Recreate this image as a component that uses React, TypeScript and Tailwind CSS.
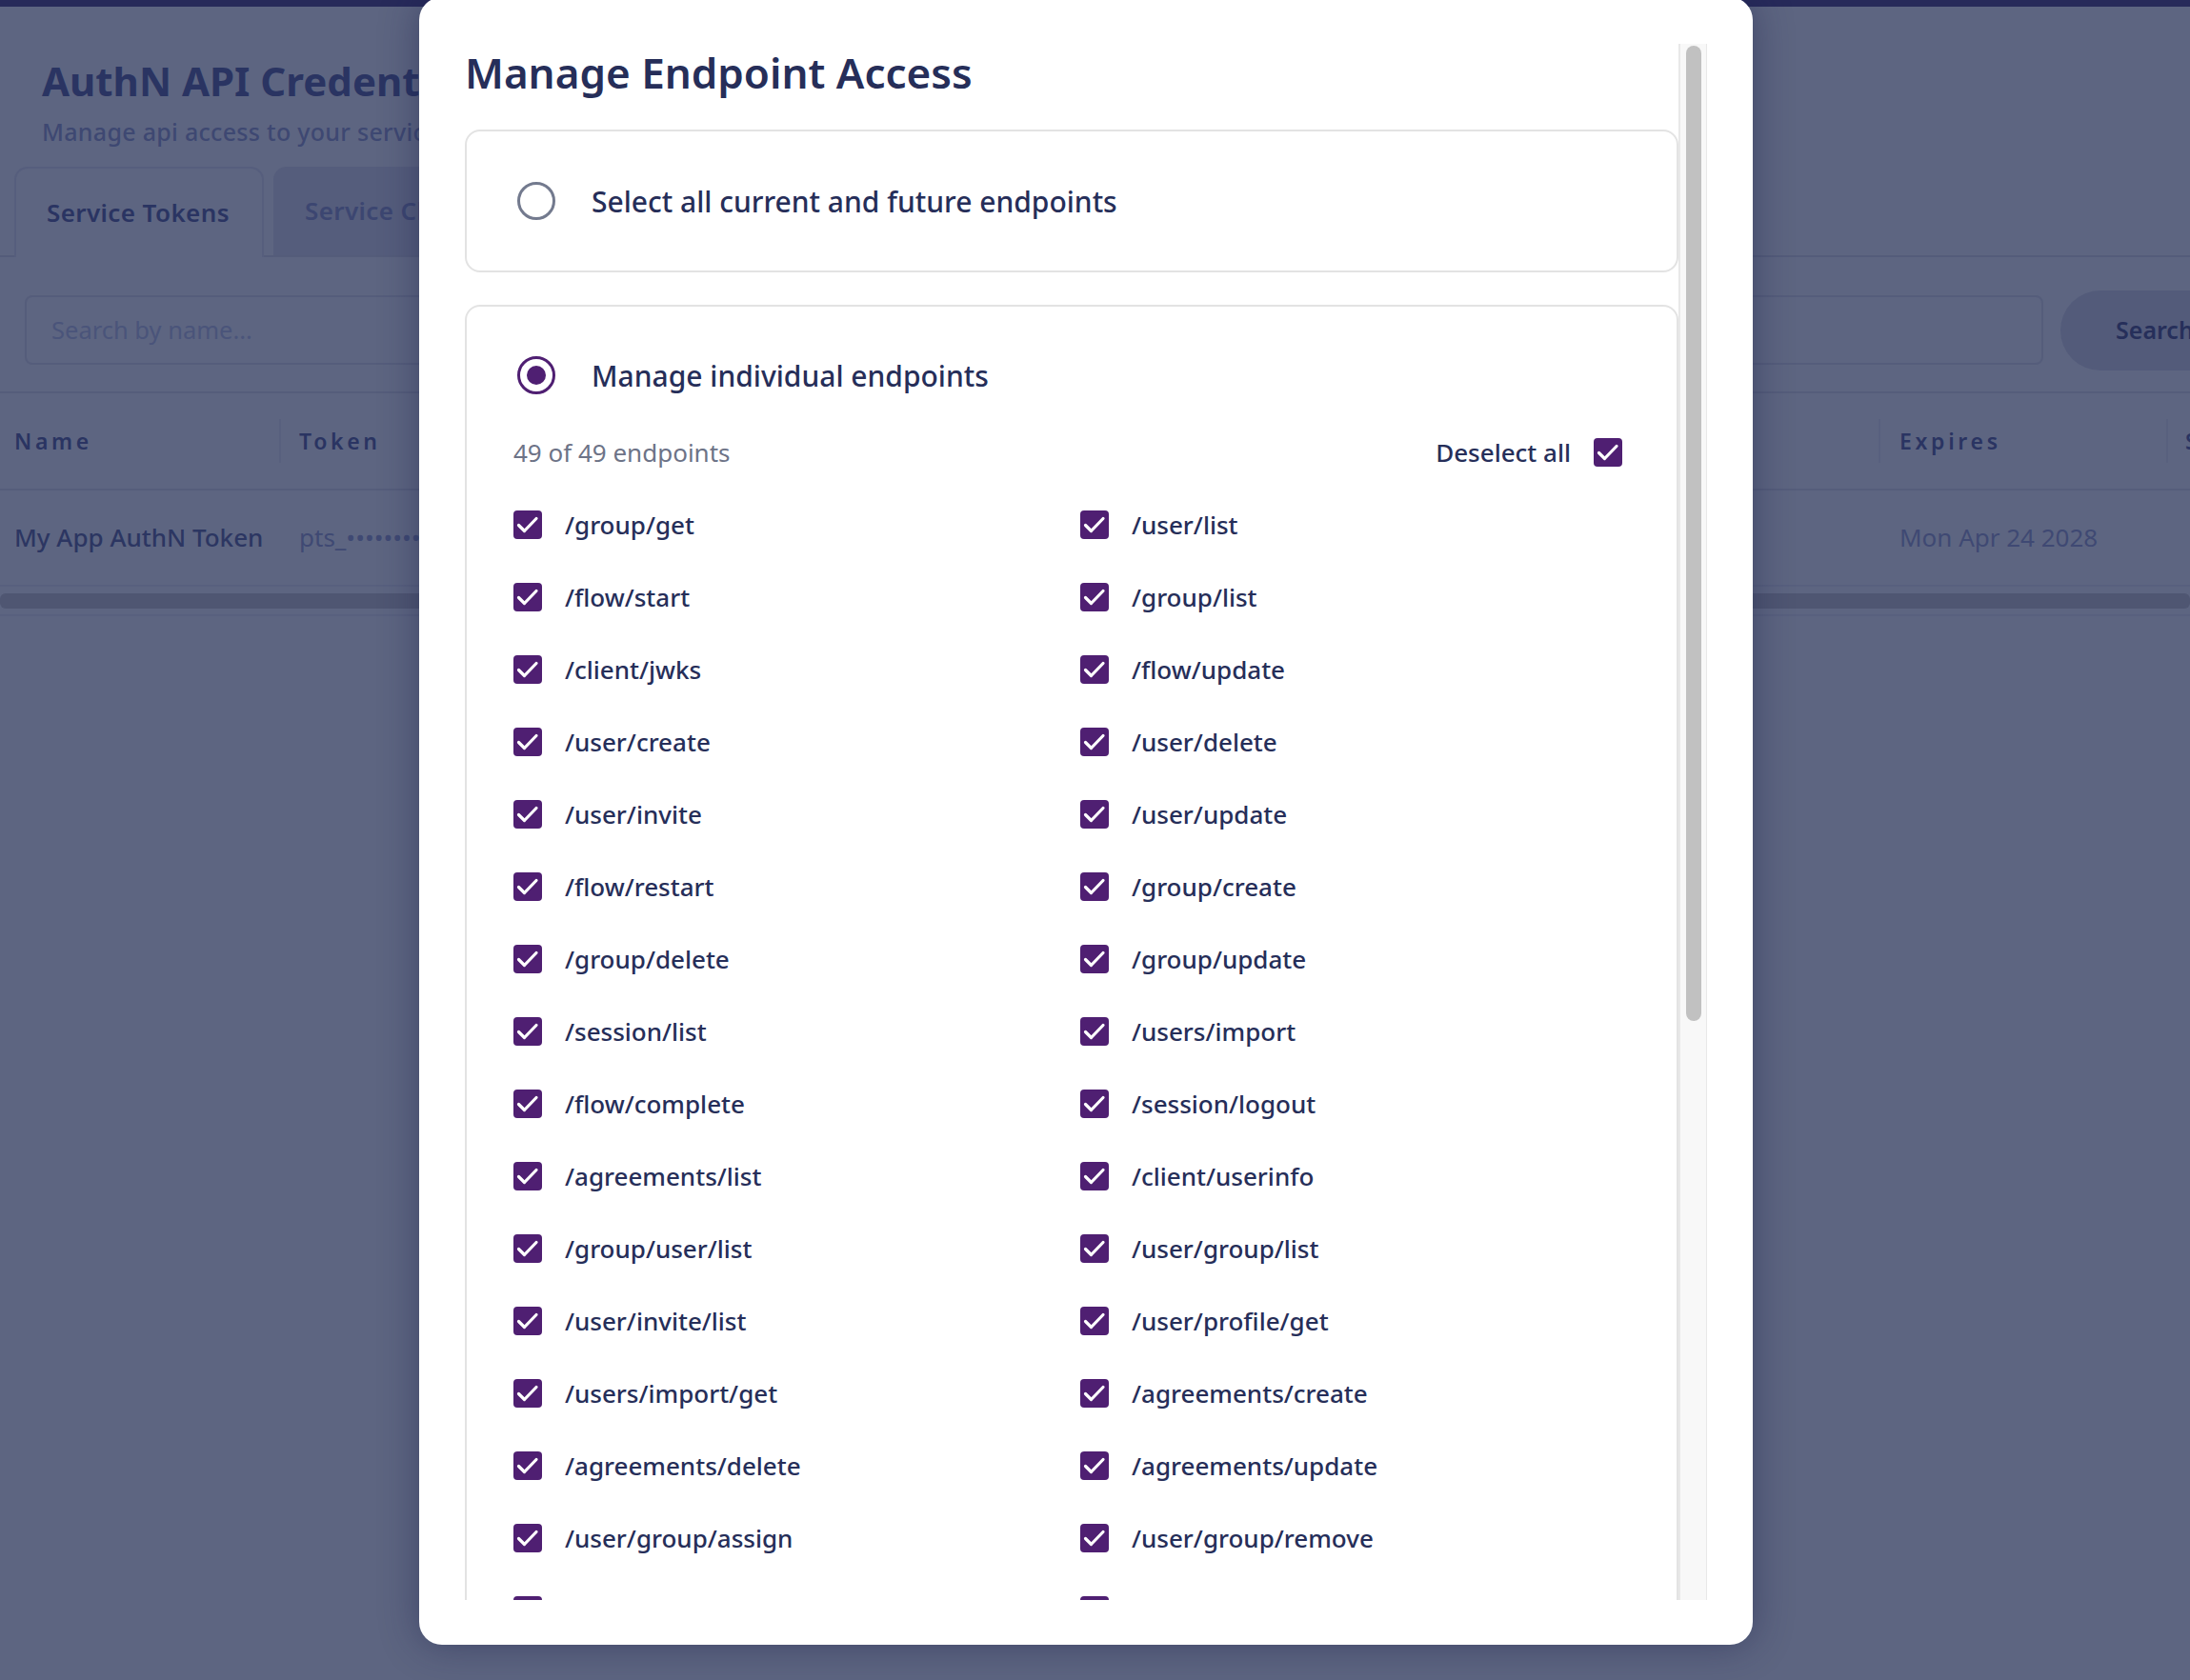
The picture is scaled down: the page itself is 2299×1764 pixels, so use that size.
import React from "react";

const ENDPOINTS = [
  "/group/get", "/user/list",
  "/flow/start", "/group/list",
  "/client/jwks", "/flow/update",
  "/user/create", "/user/delete",
  "/user/invite", "/user/update",
  "/flow/restart", "/group/create",
  "/group/delete", "/group/update",
  "/session/list", "/users/import",
  "/flow/complete", "/session/logout",
  "/agreements/list", "/client/userinfo",
  "/group/user/list", "/user/group/list",
  "/user/invite/list", "/user/profile/get",
  "/users/import/get", "/agreements/create",
  "/agreements/delete", "/agreements/update",
  "/user/group/assign", "/user/group/remove",
  "/user/get", "/flow/get",
  "/client/token", "/session/get",
  "/session/refresh", "/user/activate",
  "/user/deactivate", "/user/password/reset",
  "/user/email/verify", "/user/profile/update",
  "/group/user/add", "/group/user/remove",
  "/agreements/get", "/client/introspect",
  "/client/revoke", "/users/export",
  "/flow/cancel", "/user/invite/resend",
  "/user/mfa/reset",
];

function Check() {
  return (
    <span className="flex h-[30px] w-[30px] shrink-0 items-center justify-center rounded-[4px] bg-[#4f1f72]">
      <svg width="30" height="30" viewBox="0 0 30 30" fill="none">
        <path d="M5.5 15.5 L11.5 21.5 L24 8.5" stroke="#ffffff" strokeWidth="3.2" strokeLinecap="round" strokeLinejoin="round" />
      </svg>
    </span>
  );
}

function BackgroundPage() {
  return (
    <div className="flex flex-col">
      <div className="h-[7px] bg-[#272a5a]" />
      <div className="pl-[44px] pt-[50px]">
        <h1 className="text-[42px] font-bold leading-[56px] text-[#2a3462]">AuthN API Credentials</h1>
        <p className="mt-[8px] text-[25px] font-medium leading-[34px] tracking-[0.3px] text-[#3e4872]">
          Manage api access to your services with service tokens and clients
        </p>
      </div>
      <div className="mt-[22px] flex h-[93px] items-end gap-[10px] border-b-2 border-[#545c7a] pl-[15px]">
        <div className="-mb-[2px] flex h-[95px] w-[262px] shrink-0 items-center rounded-t-[14px] border-2 border-b-0 border-[#565e7d] bg-[#5d6581] pl-[32px] text-[26px] font-semibold tracking-[0.4px] text-[#2a3462]">
          Service Tokens
        </div>
        <div className="flex h-[93px] w-[262px] shrink-0 items-center rounded-t-[14px] bg-[#555d7c] pl-[33px] text-[26px] font-semibold tracking-[0.4px] text-[#3c4671]">
          Service Clients
        </div>
      </div>
      <div className="flex h-[143px] items-center gap-[18px] border-b-2 border-[#555d7b] pl-[26px] pt-[12px]">
        <div className="flex h-[73px] w-[2119px] shrink-0 items-center rounded-[8px] border-2 border-[#555d7b] pl-[26px] text-[25.5px] text-[#4a547a]">
          Search by name...
        </div>
        <div className="flex h-[84px] w-[220px] shrink-0 items-center rounded-full bg-[#535b7a] pl-[58px] text-[25px] font-semibold text-[#262f5a]">
          Search
        </div>
      </div>
      <div className="flex h-[102px] items-center border-b-2 border-[#555d7b] text-[23px] font-semibold tracking-[0.16em] text-[#2a3462]">
        <div className="w-[293px] shrink-0 pl-[15px]">Name</div>
        <div className="flex w-[1679px] shrink-0 items-center">
          <div className="h-[46px] w-[2px] bg-[#58607e]" />
          <span className="ml-[19px]">Token</span>
        </div>
        <div className="flex w-[302px] shrink-0 items-center">
          <div className="h-[46px] w-[2px] bg-[#58607e]" />
          <span className="ml-[20px]">Expires</span>
        </div>
        <div className="flex shrink-0 items-center">
          <div className="h-[46px] w-[2px] bg-[#58607e]" />
          <span className="ml-[18px]">Status</span>
        </div>
      </div>
      <div className="flex h-[101px] items-center border-b-2 border-[#58607e] text-[26px]">
        <div className="w-[293px] shrink-0 pl-[15px] font-medium text-[#2c3662]">My App AuthN Token</div>
        <div className="w-[1679px] shrink-0 pl-[21px] text-[#3f4973]">pts_••••••••••••••••</div>
        <div className="w-[302px] shrink-0 pl-[22px] text-[#3f4973]">Mon Apr 24 2028</div>
      </div>
      <div className="mt-[7px] h-[16px] w-[2299px] rounded-[6px] bg-[#4f5672]" />
      <div className="mt-[6px] h-[2px] bg-[#58607e]" />
    </div>
  );
}

export default function App() {
  return (
    <div className="relative h-[1764px] w-[2299px] overflow-hidden bg-[#5d6581] font-['Noto_Sans',sans-serif]">
      <BackgroundPage />
      <div className="absolute left-[440px] top-[-3px] flex h-[1730px] w-[1400px] flex-col rounded-[24px] bg-white pb-[47px] pl-[48px] pr-[48px] pt-[49px] shadow-[0_0_40px_rgba(25,28,70,0.45)]">
        <div className="flex h-[1634px]">
          <div className="w-[1274px] shrink-0 overflow-hidden text-[#262e59]">
            <h2 className="text-[44px] font-semibold leading-[60px] text-[#262e59]">Manage Endpoint Access</h2>

            <div className="mt-[30px] flex h-[150px] items-center gap-[38px] rounded-[16px] border-2 border-[#e3e3e3] pl-[53px]">
              <span className="h-[40px] w-[40px] shrink-0 rounded-full border-[3px] border-[#737a8e]" />
              <span className="text-[30px] font-medium">Select all current and future endpoints</span>
            </div>

            <div className="mt-[34px] rounded-[16px] border-2 border-[#e3e3e3] pb-[40px] pl-[49px] pr-[57px] pt-[52px]">
              <div className="ml-[4px] flex h-[40px] items-center gap-[38px]">
                <span className="flex h-[40px] w-[40px] shrink-0 items-center justify-center rounded-full border-[3px] border-[#4f1f72]">
                  <span className="h-[20px] w-[20px] rounded-full bg-[#4f1f72]" />
                </span>
                <span className="text-[30px] font-medium">Manage individual endpoints</span>
              </div>

              <div className="mt-[41px] flex h-[40px] items-center justify-between">
                <span className="text-[26px] text-[#6d7387]">49 of 49 endpoints</span>
                <div className="flex items-center gap-[24px]">
                  <span className="text-[26px] font-medium">Deselect all</span>
                  <Check />
                </div>
              </div>

              <div className="mt-[18px] grid grid-cols-[595px_1fr]">
                {ENDPOINTS.map((ep) => (
                  <div key={ep} className="flex h-[76px] items-center gap-[24px]">
                    <Check />
                    <span className="text-[26px] font-medium">{ep}</span>
                  </div>
                ))}
              </div>
            </div>
          </div>
          <div className="flex w-[30px] shrink-0 flex-col border-l-2 border-r border-[#e8e8e8] bg-[#f8f8f8] pt-[2px]">
            <div className="ml-[6px] h-[1024px] w-[16px] rounded-full bg-[#c1c1c1]" />
          </div>
        </div>
      </div>
    </div>
  );
}
